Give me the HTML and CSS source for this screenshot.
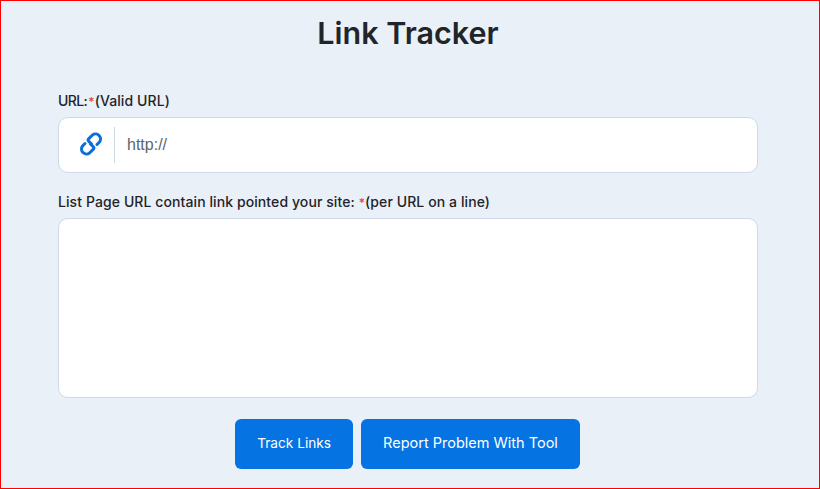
FILE: index.html
```html
<!DOCTYPE html>
<html lang="en">

<head>
    <meta charset="UTF-8">
    <title>Link Tracker</title>
    <link rel="stylesheet" href="styles.css">
</head>

<body>

    <div class="tool">
        <h1 class="tool-title">Link Tracker</h1>

        <form class="tool-form">
            <label class="field-label" for="url"><span class="label-name">URL: </span><span class="req">*</span>(Valid URL)</label>
            <div class="input-box">
                <span class="input-icon">
                    <svg width="24" height="26" viewBox="0 0 24 25" fill="none" stroke="#0a6fdc" stroke-width="3" stroke-linecap="round" stroke-linejoin="round">
                        <path d="M12.5 12.5 L9.6 9.6 Q8.5 8.5 9.6 7.4 L13.5 3.5 a5 5 0 0 1 7 7 L18 13"/>
                        <path d="M11.5 12.5 L14.4 15.4 Q15.5 16.5 14.4 17.6 L10.5 21.5 a5 5 0 0 1 -7 -7 L6 12"/>
                    </svg>
                </span>
                <input class="url-input" id="url" type="text" placeholder="http://">
            </div>

            <label class="field-label list-label" for="pages">List Page URL contain link pointed your site: <span class="req">*</span>(per URL on a line)</label>
            <textarea class="pages-input" id="pages"></textarea>

            <div class="actions">
                <button class="btn btn-track" type="button">Track Links</button>
                <button class="btn btn-report" type="button">Report Problem With Tool</button>
            </div>
        </form>
    </div>

</body>

</html>
```

FILE: styles.css
```css
* {
    box-sizing: border-box;
}

html,
body {
    margin: 0;
    height: 100%;
}

body {
    font-family: "Inter", sans-serif;
    color: #1f2429;
}

.tool {
    height: 489px;
    overflow: hidden;
    border: 1px solid #ff0000;
    background-color: #e9f0f8;
    padding: 0 61px 0 57px;
}

.tool-title {
    margin: 12px 0 0;
    height: 40px;
    line-height: 40px;
    text-align: center;
    font-size: 30.5px;
    font-weight: 600;
    color: #212529;
}

.tool-form {
    margin-top: 38px;
}

.field-label {
    display: block;
    height: 20px;
    line-height: 20px;
    font-size: 14px;
    font-weight: 500;
    letter-spacing: 0.09px;
    white-space: nowrap;
}

.label-name {
    letter-spacing: -0.6px;
    word-spacing: -2px;
}

.req {
    color: #ea4335;
    font-size: 12px;
}

.input-box {
    display: flex;
    align-items: center;
    height: 56px;
    margin-top: 6px;
    background-color: #fff;
    border: 1px solid #ced9e8;
    border-radius: 10px;
}

.input-icon {
    display: flex;
    align-items: center;
    justify-content: center;
    width: 56px;
    height: 36px;
    padding-left: 9px;
    padding-bottom: 3px;
    border-right: 1px solid #ced9e8;
}

.url-input {
    flex: 1;
    border: none;
    outline: none;
    background: none;
    padding: 0 12px;
    font-family: "Liberation Sans", Arial, sans-serif;
    font-size: 16px;
    color: #495057;
}

.url-input::placeholder {
    color: #5c6670;
    opacity: 1;
}

.list-label {
    margin-top: 19px;
}

.pages-input {
    display: block;
    width: 100%;
    height: 180px;
    margin-top: 6px;
    resize: none;
    background-color: #fff;
    border: 1px solid #ced9e8;
    border-radius: 10px;
    outline: none;
}

.actions {
    display: flex;
    justify-content: center;
    gap: 8px;
    margin-top: 21px;
    padding-right: 1px;
}

.btn {
    height: 50px;
    padding: 0 22px 3px;
    border: none;
    border-radius: 6px;
    background-color: #0573e1;
    color: #fff;
    font-family: "Inter", sans-serif;
    font-weight: 400;
    cursor: pointer;
}

.btn-track {
    font-size: 13.7px;
}

.btn-report {
    font-size: 14.5px;
}
```
